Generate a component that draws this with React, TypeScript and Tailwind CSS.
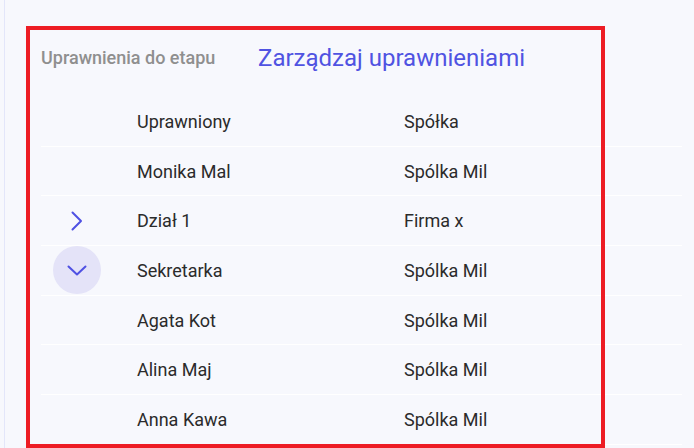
import React from "react";

const rows = [
  { name: "Monika Mal", company: "Spólka Mil", icon: null },
  { name: "Dział 1", company: "Firma x", icon: "right" },
  { name: "Sekretarka", company: "Spólka Mil", icon: "down" },
  { name: "Agata Kot", company: "Spólka Mil", icon: null },
  { name: "Alina Maj", company: "Spólka Mil", icon: null },
  { name: "Anna Kawa", company: "Spólka Mil", icon: null },
];

function ChevronRight() {
  return (
    <svg width="12" height="20" viewBox="0 0 12 20" fill="none">
      <polyline points="1.5,1.5 10,10 1.5,18.5" stroke="#4f51e3" strokeWidth="2" strokeLinecap="round" strokeLinejoin="round" />
    </svg>
  );
}

function ChevronDown() {
  return (
    <svg width="20" height="11" viewBox="0 0 20 11" fill="none">
      <polyline points="1.5,1.5 10,9.5 18.5,1.5" stroke="#4f51e3" strokeWidth="2" strokeLinecap="round" strokeLinejoin="round" />
    </svg>
  );
}

export default function App() {
  return (
    <div
      className="relative w-[694px] h-[448px] overflow-hidden bg-[#f7f8fd] pl-[4px]"
      style={{ fontFamily: "Roboto, 'Liberation Sans', sans-serif" }}
    >
      <div className="h-full border-l border-[#e3e6fa] pl-[36px] pt-[30px]">
        <div className="w-[641px]">
          <div className="flex items-center h-[55px]">
            <div className="text-[18px] font-medium text-[#8f8f8f] w-[217px] leading-none">Uprawnienia do etapu</div>
            <div className="text-[24px] text-[#5053e2] leading-none">Zarządzaj uprawnieniami</div>
          </div>
          <div className="h-[13px]" />
          <div className="grid grid-cols-[72px_267px_1fr] h-[48.7px] items-center border-b border-white text-[18px] text-[#2b2b2b]">
            <div />
            <div className="pl-6">Uprawniony</div>
            <div className="pl-6">Spółka</div>
          </div>
          {rows.map((r) => (
            <div
              key={r.name}
              className="grid grid-cols-[72px_267px_1fr] h-[49.7px] items-center border-b border-white text-[18px] text-[#2b2b2b]"
            >
              <div className="flex items-center justify-center">
                {r.icon === "right" && <ChevronRight />}
                {r.icon === "down" && (
                  <div className="w-12 h-12 rounded-full bg-[#e4e3f8] flex items-center justify-center">
                    <ChevronDown />
                  </div>
                )}
              </div>
              <div className="pl-6">{r.name}</div>
              <div className="pl-6">{r.company}</div>
            </div>
          ))}
        </div>
      </div>
      <div className="absolute left-[26px] top-[26px] w-[579px] h-[422px] border-4 border-[#ed1c24] pointer-events-none" />
    </div>
  );
}
